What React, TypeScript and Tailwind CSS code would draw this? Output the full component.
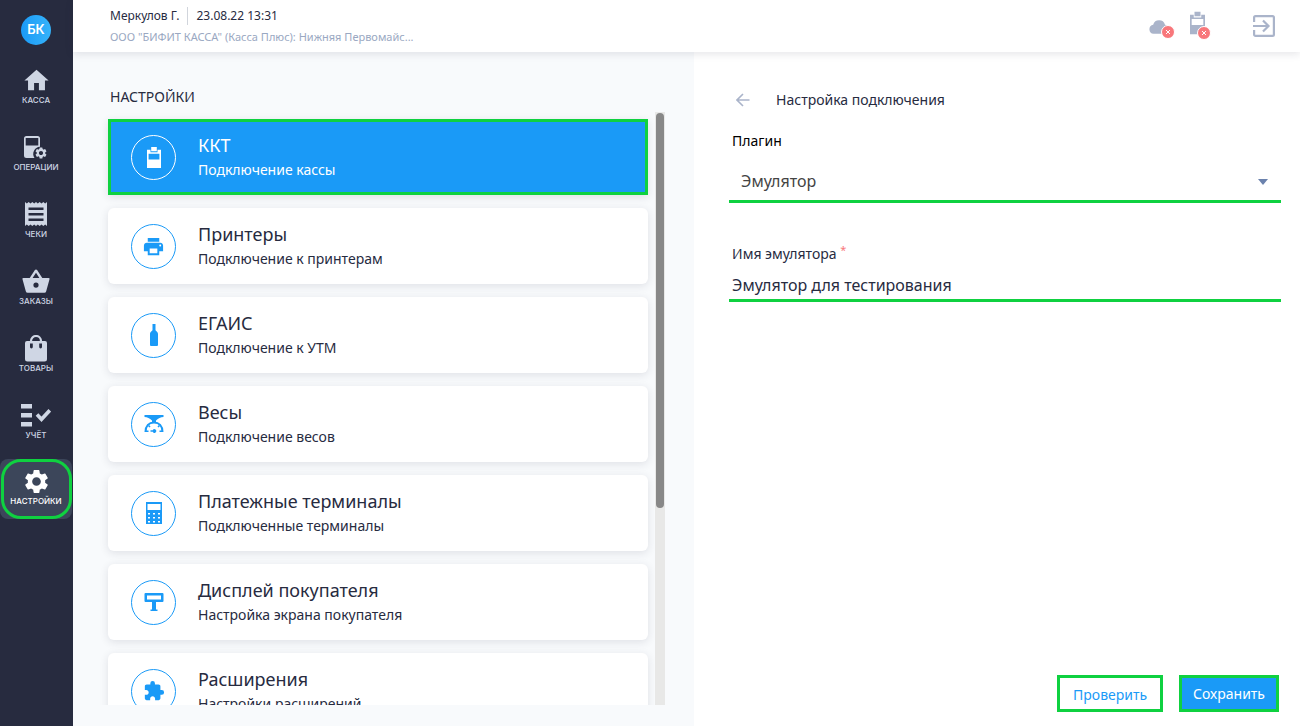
import type { ReactNode } from "react";
import { MdExtension, MdHome, MdPrint, MdSettings } from "react-icons/md";

type NavItem = { label: string; icon: ReactNode; active?: boolean };
type Setting = { title: string; text: string; icon: ReactNode; active?: boolean };

function OperationsIcon() {
  return (
    <svg width="24" height="24" viewBox="1 0 24 24" fill="currentColor">
      <path
        fillRule="evenodd"
        d="M3.500 1h11A2.500 2.500 0 0 1 17 3.500v8.300A7.200 7.200 0 0 0 11.500 23H3.500A2.500 2.500 0 0 1 1 20.500v-17A2.500 2.500 0 0 1 3.500 1Zm-.8 2v7.500h12.600V3Z"
      />
      <g transform="translate(11 11)">
        <MdSettings size={14} />
      </g>
    </svg>
  );
}

function ReceiptIcon() {
  return (
    <svg width="24" height="26" viewBox="0 0 24 26" fill="currentColor">
      <path
        fillRule="evenodd"
        d="M1 1l1.800 1.500L4.700 1l1.800 1.500L8.300 1l1.900 1.500L12 1l1.800 1.500L15.700 1l1.800 1.500L19.300 1l1.900 1.500L23 1v24l-1.800-1.500-1.900 1.500-1.800-1.500-1.800 1.500-1.900-1.500L12 25l-1.800-1.500L8.300 25l-1.800-1.500L4.700 25l-1.900-1.500L1 25ZM4.500 6.500v2.500h15v-2.500Zm0 5.500v2.500h15v-2.500Zm0 5.500v2.500h15v-2.500Z"
      />
    </svg>
  );
}

function BasketIcon() {
  return (
    <svg width="28" height="24" viewBox="0 0 28 24" fill="currentColor">
      <path
        fillRule="evenodd"
        d="M14 0.500a1.300 1.300 0 0 1 1.100.6L20.300 9H26.500a1 1 0 0 1 1 1.300l-3.300 11.900a2 2 0 0 1-2 1.500H5.800a2 2 0 0 1-2-1.500L.5 10.300A1 1 0 0 1 1.500 9h6.200L12.900 1.100A1.300 1.300 0 0 1 14 .5Zm0 3.300L10.600 9h6.800ZM14 13.500a2.600 2.600 0 1 0 0 5.200 2.600 2.600 0 0 0 0-5.200Z"
      />
    </svg>
  );
}

function BagIcon() {
  return (
    <svg width="24" height="27" viewBox="0 0 24 27" fill="currentColor">
      <path d="M7 7.500V6a5 5 0 0 1 10 0v1.500" fill="none" stroke="currentColor" strokeWidth="2.200" />
      <path
        fillRule="evenodd"
        d="M3 6h18a2 2 0 0 1 2 2v16a2.500 2.500 0 0 1-2.500 2.500h-17A2.500 2.500 0 0 1 1 24V8a2 2 0 0 1 2-2Zm3 2.500V12a1.400 1.400 0 0 0 2.800 0V8.500Zm9.200 0V12a1.400 1.400 0 0 0 2.800 0V8.500Z"
      />
    </svg>
  );
}

function AccountingIcon() {
  return (
    <svg width="30" height="24" viewBox="0 0 30 24" fill="currentColor">
      <path d="M0 1h11v4.500H0ZM0 10h11v4.500H0ZM0 19h11v4.500H0Z" />
      <path d="M16 11.500l4.500 4.800 8.300-9" fill="none" stroke="currentColor" strokeWidth="3.600" />
    </svg>
  );
}

function RegisterIcon({ className }: { className?: string }) {
  return (
    <svg className={className} viewBox="0 0 16 24" fill="currentColor">
      <path
        fillRule="evenodd"
        d="M0 3.200h4v2.800h8V3.200h4V24H0ZM1.800 7.800v6.400h12.400V7.800ZM4.800 0h6.400v4.800H4.800Z"
      />
    </svg>
  );
}

function BottleIcon() {
  return (
    <svg width="8" height="24" viewBox="0 0 8 24" fill="currentColor">
      <path d="M2.500 1h3v6C5.500 8 8 8.500 8 11v11a1 1 0 0 1-1 1H1a1 1 0 0 1-1-1V11c0-2.500 2.500-3 2.500-4Z" />
    </svg>
  );
}

function ScalesIcon() {
  return (
    <svg width="20" height="20" viewBox="0 0 20 20" fill="none" stroke="currentColor">
      <path d="M.5 1h19v2c-3 0-5 1.500-7.500 3.500V9H8V6.500C5.500 4.500 3.500 3 .5 3Z" fill="currentColor" stroke="none" />
      <path d="M1.500 18C1.500 12 5 8.500 10 8.500s8.500 3.500 8.500 9.500" strokeWidth="2" />
      <path d="M1 17.200h3.500M15.500 17.200H19M4.500 11.500l1.500 1.500M15.500 11.500l-1.500 1.500" strokeWidth="1.600" />
      <path d="M6.500 16.300h2.300a1.800 1.800 0 1 1 0 1.400H6.500Z" fill="currentColor" stroke="none" />
    </svg>
  );
}

function TerminalIcon() {
  return (
    <svg width="16" height="22" viewBox="0 0 16 22" fill="currentColor">
      <path
        fillRule="evenodd"
        d="M0 0h16v22H0ZM1.500 2v6h13V2ZM2 11v1.500h2V11Zm5 0v1.500h2V11Zm5 0v1.500h2V11ZM2 15v1.500h2V15Zm5 0v1.500h2V15Zm5 0v1.500h2V15ZM2 19v1.500h2V19Zm5 0v1.500h2V19Zm5 0v1.500h2V19Z"
      />
    </svg>
  );
}

function DisplayIcon() {
  return (
    <svg width="20" height="20" viewBox="0 0 20 20" fill="currentColor">
      <path
        fillRule="evenodd"
        d="M1.500 1h17a1 1 0 0 1 1 1v7a1 1 0 0 1-1 1H12v7.500h1.500V19h-7v-1.500H8V10H1.500a1 1 0 0 1-1-1V2a1 1 0 0 1 1-1ZM3 3.500v4h14v-4Z"
      />
    </svg>
  );
}

function ExitIcon() {
  return (
    <svg width="24" height="24" viewBox="0 0 24 24" fill="none" stroke="currentColor" strokeWidth="2.200">
      <path d="M2.100 8V3.500A1.400 1.400 0 0 1 3.500 2.100h17a1.400 1.400 0 0 1 1.400 1.400v17a1.400 1.400 0 0 1-1.400 1.400h-17a1.400 1.400 0 0 1-1.400-1.400V16" />
      <path d="M1 12h15M11 6.500l5.500 5.500-5.500 5.500" />
    </svg>
  );
}

function ErrorBadge() {
  return (
    <svg className="absolute -right-[6px] -bottom-[5px] size-[14px]" viewBox="0 0 14 14">
      <circle cx="7" cy="7" r="6.500" fill="#f8777b" stroke="#fff" />
      <path d="M5 5l4 4M9 5l-4 4" stroke="#fff" />
    </svg>
  );
}

const navItems: NavItem[] = [
  { label: "КАССА", icon: <MdHome size={29} /> },
  { label: "ОПЕРАЦИИ", icon: <OperationsIcon /> },
  { label: "ЧЕКИ", icon: <ReceiptIcon /> },
  { label: "ЗАКАЗЫ", icon: <BasketIcon /> },
  { label: "ТОВАРЫ", icon: <BagIcon /> },
  { label: "УЧЁТ", icon: <AccountingIcon /> },
  { label: "НАСТРОЙКИ", icon: <MdSettings size={29} />, active: true },
];

const settings: Setting[] = [
  { title: "ККТ", text: "Подключение кассы", icon: <RegisterIcon className="h-[23px] w-[14px]" />, active: true },
  { title: "Принтеры", text: "Подключение к принтерам", icon: <MdPrint size={23} /> },
  { title: "ЕГАИС", text: "Подключение к УТМ", icon: <BottleIcon /> },
  { title: "Весы", text: "Подключение весов", icon: <ScalesIcon /> },
  { title: "Платежные терминалы", text: "Подключенные терминалы", icon: <TerminalIcon /> },
  { title: "Дисплей покупателя", text: "Настройка экрана покупателя", icon: <DisplayIcon /> },
  { title: "Расширения", text: "Настройки расширений", icon: <MdExtension size={22} /> },
];

function Sidebar() {
  return (
    <aside className="flex w-[73px] shrink-0 flex-col bg-[#272b3f] pt-[15px] pr-px font-['Inter',sans-serif]">
      <div className="mx-auto flex size-[30px] items-center justify-center rounded-full bg-gradient-to-r from-[#1a9af7] to-[#35b3fa] text-[13px] font-semibold text-white">
        БК
      </div>
      <nav className="mt-3 flex flex-col gap-[7px]">
        {navItems.map((item) => (
          <a
            key={item.label}
            href="#"
            className={
              item.active
                ? "flex h-[60px] flex-col items-center rounded-lg bg-[#3c465a] text-white"
                : "flex h-[60px] flex-col items-center text-[#cfd6e4]"
            }
          >
            <span
              className={
                item.active
                  ? "flex h-[60px] w-[71px] flex-col items-center rounded-[20px] border-[3px] border-[#0fd140] pt-1"
                  : "flex h-[60px] flex-col items-center pt-2"
              }
            >
              <span className="flex h-[30px] items-center">{item.icon}</span>
              <span className="text-[8px] leading-[10px] font-medium">{item.label}</span>
            </span>
          </a>
        ))}
      </nav>
    </aside>
  );
}

function Header() {
  return (
    <header className="relative z-10 flex h-[52px] shrink-0 items-center justify-between bg-white pr-6 pl-[37px] shadow-[0_2px_8px_rgba(39,43,63,0.12)]">
      <div>
        <div className="flex items-center text-[12px] leading-[18px] text-[#272b3f]">
          <span className="border-r border-gray-300 pr-2">Меркулов Г.</span>
          <span className="pl-2">23.08.22 13:31</span>
        </div>
        <p className="mt-1 text-[11px] leading-4 text-[#9aa8c2]">
          ООО "БИФИТ КАССА" (Касса Плюс): Нижняя Первомайс...
        </p>
      </div>
      <div className="flex items-center text-[#aab4ca]">
        <span className="relative">
          <svg width="20" height="15" viewBox="0 0 22 16" fill="currentColor">
            <path d="M5 16a5 5 0 0 1-.4-9.900A6.800 6.800 0 0 1 17.600 6 5 5 0 0 1 17 16Z" />
          </svg>
          <ErrorBadge />
        </span>
        <span className="relative mb-[6px] ml-[21px]">
          <RegisterIcon className="h-6 w-[15px]" />
          <ErrorBadge />
        </span>
        <button type="button" aria-label="Выход" className="ml-[47px]">
          <ExitIcon />
        </button>
      </div>
    </header>
  );
}

function SettingCard({ item }: { item: Setting }) {
  return (
    <button
      type="button"
      className={
        item.active
          ? "flex h-[76px] w-full shrink-0 items-center border-[3px] border-[#0fd140] bg-[#1a9af7] pl-5 text-left text-white shadow-[0_2px_8px_rgba(39,43,63,0.12)]"
          : "flex h-[76px] w-full shrink-0 items-center rounded-md bg-white pl-[23px] text-left text-[#272b3f] shadow-[0_2px_8px_rgba(39,43,63,0.12)]"
      }
    >
      <span
        className={
          item.active
            ? "flex size-[45px] items-center justify-center rounded-full border border-white"
            : "flex size-[45px] items-center justify-center rounded-full border border-[#1a9af7] text-[#1a9af7]"
        }
      >
        {item.icon}
      </span>
      <span className="ml-[22px] flex flex-col">
        <span className="text-[18px] leading-[26px]">{item.title}</span>
        <span className="text-[14px] leading-6">{item.text}</span>
      </span>
    </button>
  );
}

function SettingsList() {
  return (
    <section className="flex min-h-0 flex-col bg-[#f8fafc] pr-[29px] pb-[21px] pl-[27px]">
      <h1 className="mt-[35px] ml-[10px] text-[14px] leading-5 text-[#272b3f]">НАСТРОЙКИ</h1>
      <div className="mt-[5px] flex min-h-0 flex-1">
        <div className="flex min-w-0 flex-1 flex-col gap-[13px] overflow-hidden pt-[7px] pr-[7px] pl-2">
          {settings.map((item) => (
            <SettingCard key={item.title} item={item} />
          ))}
        </div>
        <div className="w-[10px] shrink-0 bg-[#e8e8e7] px-px pt-px">
          <div className="h-2/3 rounded-full bg-[#888]" />
        </div>
      </div>
    </section>
  );
}

function ConnectionForm() {
  return (
    <form className="flex min-h-0 flex-col bg-white pt-[38px] pr-[19px] pb-[14px] pl-[35px] text-[#272b3f]">
      <div className="flex h-5 items-center">
        <button type="button" aria-label="Назад" className="ml-[7px] text-[#aab4ca]">
          <svg width="14" height="14" viewBox="0 0 14 14" fill="none" stroke="currentColor" strokeWidth="1.600">
            <path d="M13.500 7H1.500M7 1L1 7l6 6" />
          </svg>
        </button>
        <h2 className="ml-[26px] text-[14px] leading-5">Настройка подключения</h2>
      </div>
      <label htmlFor="plugin" className="mt-[21px] pl-[3px] text-[14px] leading-5 text-black">
        Плагин
      </label>
      <div className="relative mt-2">
        <select
          id="plugin"
          className="h-[44px] w-full appearance-none rounded-none border-b-[3px] border-[#0fd140] bg-transparent pt-[2px] pl-3 text-[16px] text-[#444] outline-none"
        >
          <option>Эмулятор</option>
        </select>
        <svg className="pointer-events-none absolute top-5 right-[13px]" width="10" height="6" viewBox="0 0 10 6">
          <path d="M0 0h10L5 6Z" fill="#6b82ad" />
        </svg>
      </div>
      <label htmlFor="name" className="mt-[41px] pl-[3px] text-[14px] leading-5">
        Имя эмулятора <sup className="text-[11px] leading-none text-[#f8777b]">*</sup>
      </label>
      <input
        id="name"
        type="text"
        defaultValue="Эмулятор для тестирования"
        className="mt-1 h-[34px] w-full border-b-[3px] border-[#0fd140] pt-[2px] pl-[3px] text-[16px] outline-none"
      />
      <div className="mt-auto flex justify-end gap-4 pr-[2px] text-[14px]">
        <button type="button" className="h-[37px] border-[3px] border-[#0fd140] px-[13px] pt-px text-[#1a9af7]">
          Проверить
        </button>
        <button type="submit" className="h-[37px] border-[3px] border-[#0fd140] bg-[#1a9af7] px-[11px] text-white">
          Сохранить
        </button>
      </div>
    </form>
  );
}

export default function App() {
  return (
    <div className="flex h-screen overflow-hidden bg-white font-['Noto_Sans',sans-serif]">
      <Sidebar />
      <div className="flex min-w-0 flex-1 flex-col">
        <Header />
        <main className="grid min-h-0 flex-1 grid-cols-[41fr_40fr]">
          <SettingsList />
          <ConnectionForm />
        </main>
      </div>
    </div>
  );
}
